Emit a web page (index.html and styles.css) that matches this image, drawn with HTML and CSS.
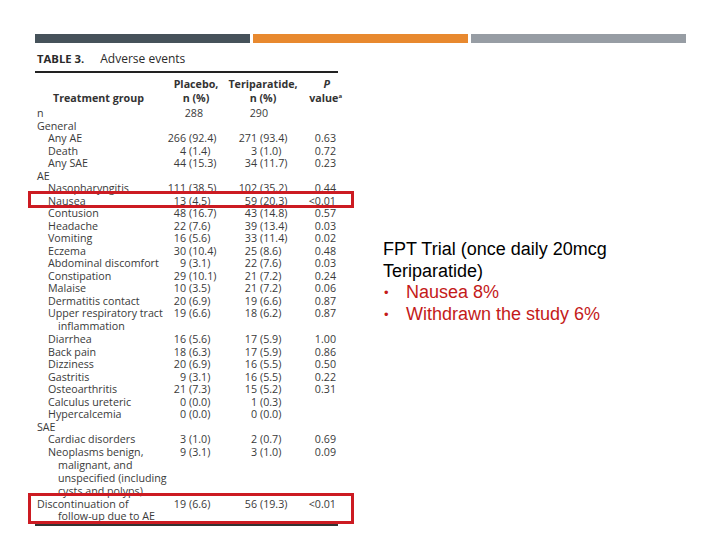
FILE: index.html
```html
<!DOCTYPE html>
<html>
<head>
<meta charset="utf-8">
<link rel="stylesheet" href="styles.css">
</head>
<body>
<div class="bars">
  <div class="bar bar-dark"></div>
  <div class="bar bar-orange"></div>
  <div class="bar bar-gray"></div>
</div>
<div class="main">
  <div class="tablewrap">
    <div class="caption"><b>TABLE 3.</b><span>Adverse events</span></div>
    <div class="tbl">
      <div class="head">
        <div class="h-label">Treatment group</div>
        <div class="h-col">Placebo,<br>n (%)</div>
        <div class="h-col">Teriparatide,<br>n (%)</div>
        <div class="h-p"><i>P</i><br>value<sup>a</sup></div>
      </div>
      <div class="row"><div class="lab top">n</div><div class="pl"><span class="c c-mid">288</span></div><div class="te"><span class="c c-mid">290</span></div><div class="pv"></div></div>
      <div class="row"><div class="lab top">General</div><div></div><div></div><div></div></div>
      <div class="row"><div class="lab">Any AE</div><div class="pl"><span class="c">266</span><span class="pc">(92.4)</span></div><div class="te"><span class="c">271</span><span class="pc">(93.4)</span></div><div class="pv">0.63</div></div>
      <div class="row"><div class="lab">Death</div><div class="pl"><span class="c">4</span><span class="pc">(1.4)</span></div><div class="te"><span class="c">3</span><span class="pc">(1.0)</span></div><div class="pv">0.72</div></div>
      <div class="row"><div class="lab">Any SAE</div><div class="pl"><span class="c">44</span><span class="pc">(15.3)</span></div><div class="te"><span class="c">34</span><span class="pc">(11.7)</span></div><div class="pv">0.23</div></div>
      <div class="row"><div class="lab top">AE</div><div></div><div></div><div></div></div>
      <div class="row"><div class="lab">Nasopharyngitis</div><div class="pl"><span class="c">111</span><span class="pc">(38.5)</span></div><div class="te"><span class="c">102</span><span class="pc">(35.2)</span></div><div class="pv">0.44</div></div>
      <div class="row boxed boxed-one"><div class="lab">Nausea</div><div class="pl"><span class="c">13</span><span class="pc">(4.5)</span></div><div class="te"><span class="c">59</span><span class="pc">(20.3)</span></div><div class="pv">&lt;0.01</div></div>
      <div class="row"><div class="lab">Contusion</div><div class="pl"><span class="c">48</span><span class="pc">(16.7)</span></div><div class="te"><span class="c">43</span><span class="pc">(14.8)</span></div><div class="pv">0.57</div></div>
      <div class="row"><div class="lab">Headache</div><div class="pl"><span class="c">22</span><span class="pc">(7.6)</span></div><div class="te"><span class="c">39</span><span class="pc">(13.4)</span></div><div class="pv">0.03</div></div>
      <div class="row"><div class="lab">Vomiting</div><div class="pl"><span class="c">16</span><span class="pc">(5.6)</span></div><div class="te"><span class="c">33</span><span class="pc">(11.4)</span></div><div class="pv">0.02</div></div>
      <div class="row"><div class="lab">Eczema</div><div class="pl"><span class="c">30</span><span class="pc">(10.4)</span></div><div class="te"><span class="c">25</span><span class="pc">(8.6)</span></div><div class="pv">0.48</div></div>
      <div class="row"><div class="lab">Abdominal discomfort</div><div class="pl"><span class="c">9</span><span class="pc">(3.1)</span></div><div class="te"><span class="c">22</span><span class="pc">(7.6)</span></div><div class="pv">0.03</div></div>
      <div class="row"><div class="lab">Constipation</div><div class="pl"><span class="c">29</span><span class="pc">(10.1)</span></div><div class="te"><span class="c">21</span><span class="pc">(7.2)</span></div><div class="pv">0.24</div></div>
      <div class="row"><div class="lab">Malaise</div><div class="pl"><span class="c">10</span><span class="pc">(3.5)</span></div><div class="te"><span class="c">21</span><span class="pc">(7.2)</span></div><div class="pv">0.06</div></div>
      <div class="row"><div class="lab">Dermatitis contact</div><div class="pl"><span class="c">20</span><span class="pc">(6.9)</span></div><div class="te"><span class="c">19</span><span class="pc">(6.6)</span></div><div class="pv">0.87</div></div>
      <div class="row"><div class="lab hang">Upper respiratory tract<br>inflammation</div><div class="pl"><span class="c">19</span><span class="pc">(6.6)</span></div><div class="te"><span class="c">18</span><span class="pc">(6.2)</span></div><div class="pv">0.87</div></div>
      <div class="row"><div class="lab">Diarrhea</div><div class="pl"><span class="c">16</span><span class="pc">(5.6)</span></div><div class="te"><span class="c">17</span><span class="pc">(5.9)</span></div><div class="pv">1.00</div></div>
      <div class="row"><div class="lab">Back pain</div><div class="pl"><span class="c">18</span><span class="pc">(6.3)</span></div><div class="te"><span class="c">17</span><span class="pc">(5.9)</span></div><div class="pv">0.86</div></div>
      <div class="row"><div class="lab">Dizziness</div><div class="pl"><span class="c">20</span><span class="pc">(6.9)</span></div><div class="te"><span class="c">16</span><span class="pc">(5.5)</span></div><div class="pv">0.50</div></div>
      <div class="row"><div class="lab">Gastritis</div><div class="pl"><span class="c">9</span><span class="pc">(3.1)</span></div><div class="te"><span class="c">16</span><span class="pc">(5.5)</span></div><div class="pv">0.22</div></div>
      <div class="row"><div class="lab">Osteoarthritis</div><div class="pl"><span class="c">21</span><span class="pc">(7.3)</span></div><div class="te"><span class="c">15</span><span class="pc">(5.2)</span></div><div class="pv">0.31</div></div>
      <div class="row"><div class="lab">Calculus ureteric</div><div class="pl"><span class="c">0</span><span class="pc">(0.0)</span></div><div class="te"><span class="c">1</span><span class="pc">(0.3)</span></div><div class="pv"></div></div>
      <div class="row"><div class="lab">Hypercalcemia</div><div class="pl"><span class="c">0</span><span class="pc">(0.0)</span></div><div class="te"><span class="c">0</span><span class="pc">(0.0)</span></div><div class="pv"></div></div>
      <div class="row"><div class="lab top">SAE</div><div></div><div></div><div></div></div>
      <div class="row"><div class="lab">Cardiac disorders</div><div class="pl"><span class="c">3</span><span class="pc">(1.0)</span></div><div class="te"><span class="c">2</span><span class="pc">(0.7)</span></div><div class="pv">0.69</div></div>
      <div class="row"><div class="lab hang">Neoplasms benign,<br>malignant, and<br>unspecified (including<br>cysts and polyps)</div><div class="pl"><span class="c">9</span><span class="pc">(3.1)</span></div><div class="te"><span class="c">3</span><span class="pc">(1.0)</span></div><div class="pv">0.09</div></div>
      <div class="row boxed boxed-two"><div class="lab top hang-top">Discontinuation of<br>follow-up due to AE</div><div class="pl"><span class="c">19</span><span class="pc">(6.6)</span></div><div class="te"><span class="c">56</span><span class="pc">(19.3)</span></div><div class="pv">&lt;0.01</div></div>
    </div>
  </div>
  <div class="notes">
    <div class="note-title">FPT Trial (once daily 20mcg Teriparatide)</div>
    <ul class="note-list">
      <li>Nausea 8%</li>
      <li>Withdrawn the study 6%</li>
    </ul>
  </div>
</div>
</body>
</html>
```
FILE: styles.css
```css
html, body {
  margin: 0;
  padding: 0;
  background: #ffffff;
}

body {
  width: 720px;
  height: 540px;
  overflow: hidden;
  font-family: "Open Sans", "Noto Sans", sans-serif;
  color: #3a3a3a;
}

.bars {
  display: flex;
  gap: 3px;
  padding: 34px 0 0 35px;
}

.bar {
  width: 215px;
  height: 9px;
}

.bar-dark { background: #46525a; }
.bar-orange { background: #e8892f; }
.bar-gray { background: #979da4; }

.main {
  display: flex;
  padding-left: 35px;
}

.tablewrap {
  width: 303px;
  flex: none;
}

.caption {
  margin-top: 8px;
  font-size: 12px;
  line-height: 16px;
  padding-left: 2px;
  display: flex;
  gap: 16px;
  color: #2a2a2a;
}

.caption b {
  font-weight: 700;
  font-size: 11.3px;
}

.tbl {
  margin-top: 4px;
  border-top: 2px solid #222;
  border-bottom: 2px solid #333;
  padding-bottom: 1px;
  font-size: 10.7px;
  line-height: 12.5px;
}

.head {
  display: grid;
  grid-template-columns: 131px 60px 74px 38px;
  font-weight: 700;
  font-size: 10.7px;
  line-height: 14px;
  padding-top: 4px;
  padding-bottom: 2px;
  color: #333;
}

.h-label {
  align-self: end;
  padding-left: 18px;
}

.h-col {
  text-align: center;
}

.h-p {
  text-align: right;
  margin-right: -4px;
}

.h-p i {
  font-weight: 700;
  padding-right: 12px;
}

.h-p sup {
  font-size: 6px;
  line-height: 0;
  vertical-align: 4px;
}

.row {
  display: grid;
  grid-template-columns: 131px 60px 74px 38px;
}

.lab {
  padding-left: 13px;
  white-space: nowrap;
}

.lab.top {
  padding-left: 2px;
}

.lab.hang {
  padding-left: 23px;
  text-indent: -10px;
  line-height: 13px;
}

.lab.hang-top {
  padding-left: 23px;
  text-indent: -21px;
}

.pl, .te {
  display: flex;
  white-space: nowrap;
}

.pl .c {
  width: 20px;
  text-align: right;
  flex: none;
}

.te .c {
  width: 31px;
  text-align: right;
  flex: none;
}

.pl .c-mid {
  width: 37px;
}

.te .c-mid {
  width: 42px;
}

.pc {
  padding-left: 3px;
}

.pv {
  text-align: right;
  padding-right: 2px;
  white-space: nowrap;
}

.boxed {
  position: relative;
}

.boxed::after {
  content: "";
  position: absolute;
  left: -7px;
  right: -16px;
  border: 3px solid #cc1b22;
}

.boxed-one::after {
  top: -4px;
  bottom: -1px;
}

.boxed-two::after {
  top: -5px;
  bottom: -1px;
}

.notes {
  margin-left: 45px;
  margin-top: 196px;
  width: 240px;
  font-family: "Liberation Sans", Arial, sans-serif;
  font-size: 18px;
  line-height: 21.6px;
  color: #000;
}

.note-list {
  list-style: none;
  margin: 0;
  padding: 0;
  color: #c41a1a;
}

.note-list li {
  position: relative;
  padding-left: 23px;
}

.note-list li::before {
  content: "•";
  position: absolute;
  left: 1px;
  top: 0;
  font-size: 13px;
  color: #c41a1a;
}
```
